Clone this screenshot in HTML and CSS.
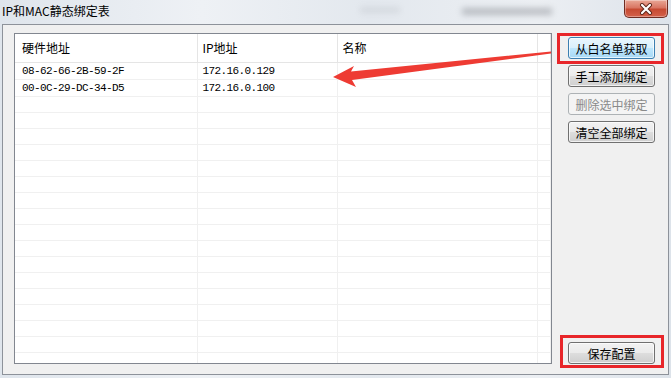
FILE: index.html
```html
<!DOCTYPE html>
<html lang="zh-CN">
<head>
  <meta charset="UTF-8">
  <title>IP和MAC静态绑定表</title>
  <link rel="stylesheet" href="styles.css">
</head>
<body>

  <div class="window">
    <div class="titlebar">
      <span class="title">IP和MAC静态绑定表</span>
      <div class="blur blur-a"></div>
      <div class="blur blur-b"></div>
      <div class="close">
        <svg width="16" height="12" viewBox="0 0 16 12">
          <path d="M4 2 L12 10 M12 2 L4 10" stroke="#5a2418" stroke-width="4" stroke-linecap="round"/>
          <path d="M4 2 L12 10 M12 2 L4 10" stroke="#fff" stroke-width="2.2" stroke-linecap="round"/>
        </svg>
      </div>
    </div>

    <div class="client">
      <div class="list">
        <table>
          <colgroup>
            <col class="c1"><col class="c2"><col class="c3"><col>
          </colgroup>
          <thead>
            <tr><th class="first">硬件地址</th><th>IP地址</th><th>名称</th><th></th></tr>
          </thead>
          <tbody>
            <tr><td class="first mono">08-62-66-2B-59-2F</td><td class="mono">172.16.0.129</td><td></td><td></td></tr>
            <tr><td class="first mono">00-0C-29-DC-34-D5</td><td class="mono">172.16.0.100</td><td></td><td></td></tr>
            <tr><td></td><td></td><td></td><td></td></tr>
            <tr><td></td><td></td><td></td><td></td></tr>
            <tr><td></td><td></td><td></td><td></td></tr>
            <tr><td></td><td></td><td></td><td></td></tr>
            <tr><td></td><td></td><td></td><td></td></tr>
            <tr><td></td><td></td><td></td><td></td></tr>
            <tr><td></td><td></td><td></td><td></td></tr>
            <tr><td></td><td></td><td></td><td></td></tr>
            <tr><td></td><td></td><td></td><td></td></tr>
            <tr><td></td><td></td><td></td><td></td></tr>
            <tr><td></td><td></td><td></td><td></td></tr>
            <tr><td></td><td></td><td></td><td></td></tr>
            <tr><td></td><td></td><td></td><td></td></tr>
            <tr><td></td><td></td><td></td><td></td></tr>
            <tr><td></td><td></td><td></td><td></td></tr>
            <tr><td></td><td></td><td></td><td></td></tr>
            <tr><td></td><td></td><td></td><td></td></tr>
          </tbody>
        </table>
      </div>

      <div class="side">
        <button class="btn default">从白名单获取</button>
        <button class="btn">手工添加绑定</button>
        <button class="btn" disabled>删除选中绑定</button>
        <button class="btn">清空全部绑定</button>
        <button class="btn save">保存配置</button>
      </div>
    </div>
  </div>

  <!-- annotations drawn over the screenshot -->
  <div class="mark mark-top"></div>
  <div class="mark mark-save"></div>
  <svg class="arrow" width="671" height="378" viewBox="0 0 671 378">
    <polygon points="333,77 354,66 351,71.5 551,51.5 551,53.5 352,80 356,87" fill="#ee3b33"/>
  </svg>

</body>
</html>
```

FILE: styles.css
```css
body {
  margin: 0;
  width: 671px;
  height: 378px;
  overflow: hidden;
  position: relative;
  font-family: "Noto Sans CJK SC", "Noto Sans", sans-serif;
  font-size: 12px;
  color: #000;
  background: linear-gradient(90deg, #dfe5ec 0%, #eef1f5 30%, #e3e8ee 55%, #eceff3 80%, #dde3ea 100%);
}

.window {
  display: flex;
  flex-direction: column;
  height: 378px;
}

.titlebar {
  height: 24px;
  position: relative;
  display: flex;
  align-items: center;
  padding-left: 2px;
  flex-shrink: 0;
}

.title {
  line-height: 14px;
  padding-bottom: 2px;
}

.blur {
  position: absolute;
  background: #7c8087;
  filter: blur(3px);
  opacity: 0.45;
}

.blur-a {
  left: 462px;
  top: 8px;
  width: 90px;
  height: 7px;
}

.blur-b {
  left: 360px;
  top: 7px;
  width: 40px;
  height: 6px;
  opacity: 0.15;
}

.close {
  position: absolute;
  right: 3px;
  top: 0;
  width: 44px;
  height: 18px;
  box-sizing: border-box;
  border: 1px solid #6e2c22;
  border-top: none;
  border-radius: 0 0 5px 5px;
  background: linear-gradient(#e9a896 0%, #d97663 45%, #c64a32 55%, #d4614a 100%);
  box-shadow: inset 0 0 0 1px rgba(255, 255, 255, 0.35);
  display: flex;
  align-items: center;
  justify-content: center;
}

.client {
  margin: 0 2px 3px 2px;
  flex: 1;
  display: flex;
  background: #f0f0f0;
  border: 1px solid #8d929a;
  padding: 8px 0 10px 11px;
}

.list {
  width: 536px;
  height: 329px;
  border: 1px solid #828790;
  background: #fff;
  overflow: hidden;
}

table {
  border-collapse: collapse;
  table-layout: fixed;
  width: 536px;
}

.c1 { width: 182px; }
.c2 { width: 140px; }
.c3 { width: 200px; }

th {
  height: 26px;
  padding: 0 0 2px 5px;
  text-align: left;
  font-weight: normal;
  border-right: 1px solid #e5e5e5;
  border-bottom: 1px solid #e5e5e5;
  white-space: nowrap;
}

td {
  height: 15px;
  padding: 0 0 0 5px;
  border-right: 1px solid #f0f0f0;
  border-bottom: 1px solid #f0f0f0;
  white-space: nowrap;
  line-height: 15px;
}

th.first, td.first {
  padding-left: 7px;
}

.mono {
  font-family: "Liberation Mono", monospace;
  font-size: 11px;
  letter-spacing: -0.6px;
  padding-top: 1px;
}

.side {
  display: flex;
  flex-direction: column;
  gap: 6px;
  margin-left: 16px;
  padding-top: 4px;
}

.btn {
  width: 87px;
  height: 22px;
  padding: 0;
  font-family: inherit;
  font-size: 12px;
  color: #000;
  border: 1px solid #707070;
  border-radius: 3px;
  background: linear-gradient(#f2f2f2 0%, #ebebeb 48%, #dddddd 52%, #cfcfcf 100%);
  box-shadow: inset 0 0 0 1px rgba(255, 255, 255, 0.7);
}

.btn.default {
  border-color: #3c7fb1;
  background: linear-gradient(#eaf6fd 0%, #d9f0fc 48%, #bee6fd 52%, #a7d9f5 100%);
}

.btn:disabled {
  color: #8a8a8a;
  border-color: #adb2b5;
  background: #f4f4f4;
  box-shadow: none;
}

.btn.save {
  margin-top: auto;
}

.mark {
  position: absolute;
  box-sizing: border-box;
  border: 3px solid #e8262a;
}

.mark-top {
  left: 557px;
  top: 33px;
  width: 107px;
  height: 31px;
}

.mark-save {
  left: 560px;
  top: 335px;
  width: 104px;
  height: 33px;
}

.arrow {
  position: absolute;
  left: 0;
  top: 0;
  pointer-events: none;
}
```
